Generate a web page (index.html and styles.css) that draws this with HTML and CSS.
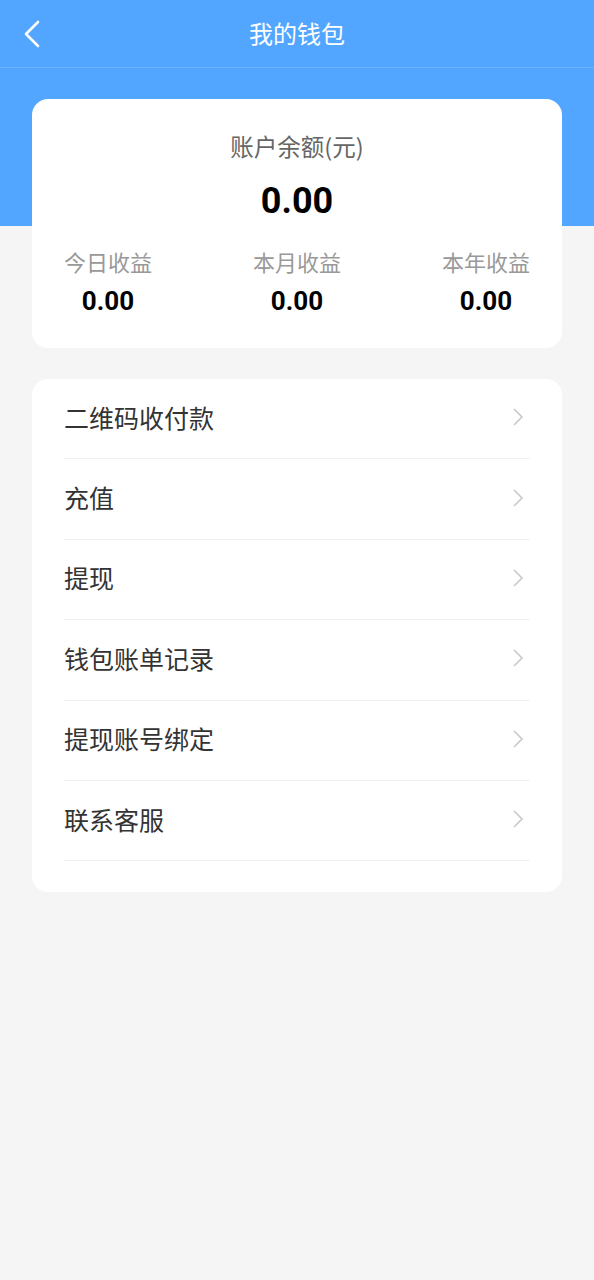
FILE: index.html
```html
<!DOCTYPE html>
<html lang="zh">
<head>
<meta charset="utf-8">
<link rel="stylesheet" href="styles.css">
</head>
<body>
<div class="page">
  <header class="nav">
    <svg class="back" width="20" height="28" viewBox="0 0 20 28"><path d="M16 2 L4 14 L16 26" fill="none" stroke="#fff" stroke-width="2.6" stroke-linecap="round" stroke-linejoin="round"/></svg>
    <div class="title">我的钱包</div>
  </header>
  <section class="card balance">
    <div class="b-label">账户余额(元)</div>
    <div class="b-value">0.00</div>
    <div class="stats">
      <div class="stat"><div class="s-label">今日收益</div><div class="s-value">0.00</div></div>
      <div class="stat"><div class="s-label">本月收益</div><div class="s-value">0.00</div></div>
      <div class="stat"><div class="s-label">本年收益</div><div class="s-value">0.00</div></div>
    </div>
  </section>
  <section class="card menu">
    <div class="row"><span>二维码收付款</span><svg class="arr" width="12" height="20" viewBox="0 0 12 20"><path d="M2 2 L10 10 L2 18" fill="none" stroke="#c8c8c8" stroke-width="1.6"/></svg></div>
    <div class="row"><span>充值</span><svg class="arr" width="12" height="20" viewBox="0 0 12 20"><path d="M2 2 L10 10 L2 18" fill="none" stroke="#c8c8c8" stroke-width="1.6"/></svg></div>
    <div class="row"><span>提现</span><svg class="arr" width="12" height="20" viewBox="0 0 12 20"><path d="M2 2 L10 10 L2 18" fill="none" stroke="#c8c8c8" stroke-width="1.6"/></svg></div>
    <div class="row"><span>钱包账单记录</span><svg class="arr" width="12" height="20" viewBox="0 0 12 20"><path d="M2 2 L10 10 L2 18" fill="none" stroke="#c8c8c8" stroke-width="1.6"/></svg></div>
    <div class="row"><span>提现账号绑定</span><svg class="arr" width="12" height="20" viewBox="0 0 12 20"><path d="M2 2 L10 10 L2 18" fill="none" stroke="#c8c8c8" stroke-width="1.6"/></svg></div>
    <div class="row"><span>联系客服</span><svg class="arr" width="12" height="20" viewBox="0 0 12 20"><path d="M2 2 L10 10 L2 18" fill="none" stroke="#c8c8c8" stroke-width="1.6"/></svg></div>
  </section>
</div>
</body>
</html>
```
FILE: styles.css
```css
* { box-sizing: border-box; }
html, body { margin: 0; padding: 0; }
body {
  background: #f5f5f5;
  font-family: "Noto Sans CJK SC", "Noto Sans", sans-serif;
  width: 594px;
  min-height: 1280px;
}
.page {
  background: linear-gradient(#53a6ff 0, #53a6ff 226px, #f5f5f5 226px);
  min-height: 1280px;
  padding-bottom: 20px;
}
.nav {
  height: 68px;
  border-bottom: 1px solid #6bb3ff;
  display: flex;
  align-items: center;
  justify-content: center;
  position: relative;
  padding-bottom: 2px;
}
.back {
  position: absolute;
  left: 22px;
  top: 20px;
}
.title {
  color: #fff;
  font-size: 24px;
  line-height: 1;
}
.card {
  background: #fff;
  border-radius: 16px;
  margin: 0 32px;
}
.balance {
  margin-top: 31px;
  height: 249px;
  padding: 30px 32px 0;
  display: flex;
  flex-direction: column;
  align-items: center;
}
.b-label {
  color: #666;
  font-size: 23.5px;
  line-height: 34px;
}
.b-value {
  margin-top: 18px;
  font-family: "Roboto", "Liberation Sans", sans-serif;
  font-weight: bold;
  font-size: 36px;
  line-height: 40px;
  color: #000;
}
.stats {
  margin-top: 24px;
  width: 100%;
  display: flex;
  justify-content: space-between;
}
.stat {
  display: flex;
  flex-direction: column;
  align-items: center;
  width: 88px;
}
.s-label {
  color: #999;
  font-size: 22px;
  line-height: 32px;
  white-space: nowrap;
}
.s-value {
  margin-top: 9px;
  font-family: "Roboto", "Liberation Sans", sans-serif;
  font-weight: bold;
  font-size: 26px;
  line-height: 30px;
  color: #000;
}
.menu {
  margin-top: 31px;
  padding: 0 32px 31px;
}
.row {
  height: 80.4px;
  display: flex;
  align-items: center;
  justify-content: space-between;
  border-bottom: 1.5px solid #f0f0f0;
  font-size: 25px;
  color: #333;
  padding-right: 6px;
  padding-bottom: 3px;
}
.row span { line-height: 1; }
```
